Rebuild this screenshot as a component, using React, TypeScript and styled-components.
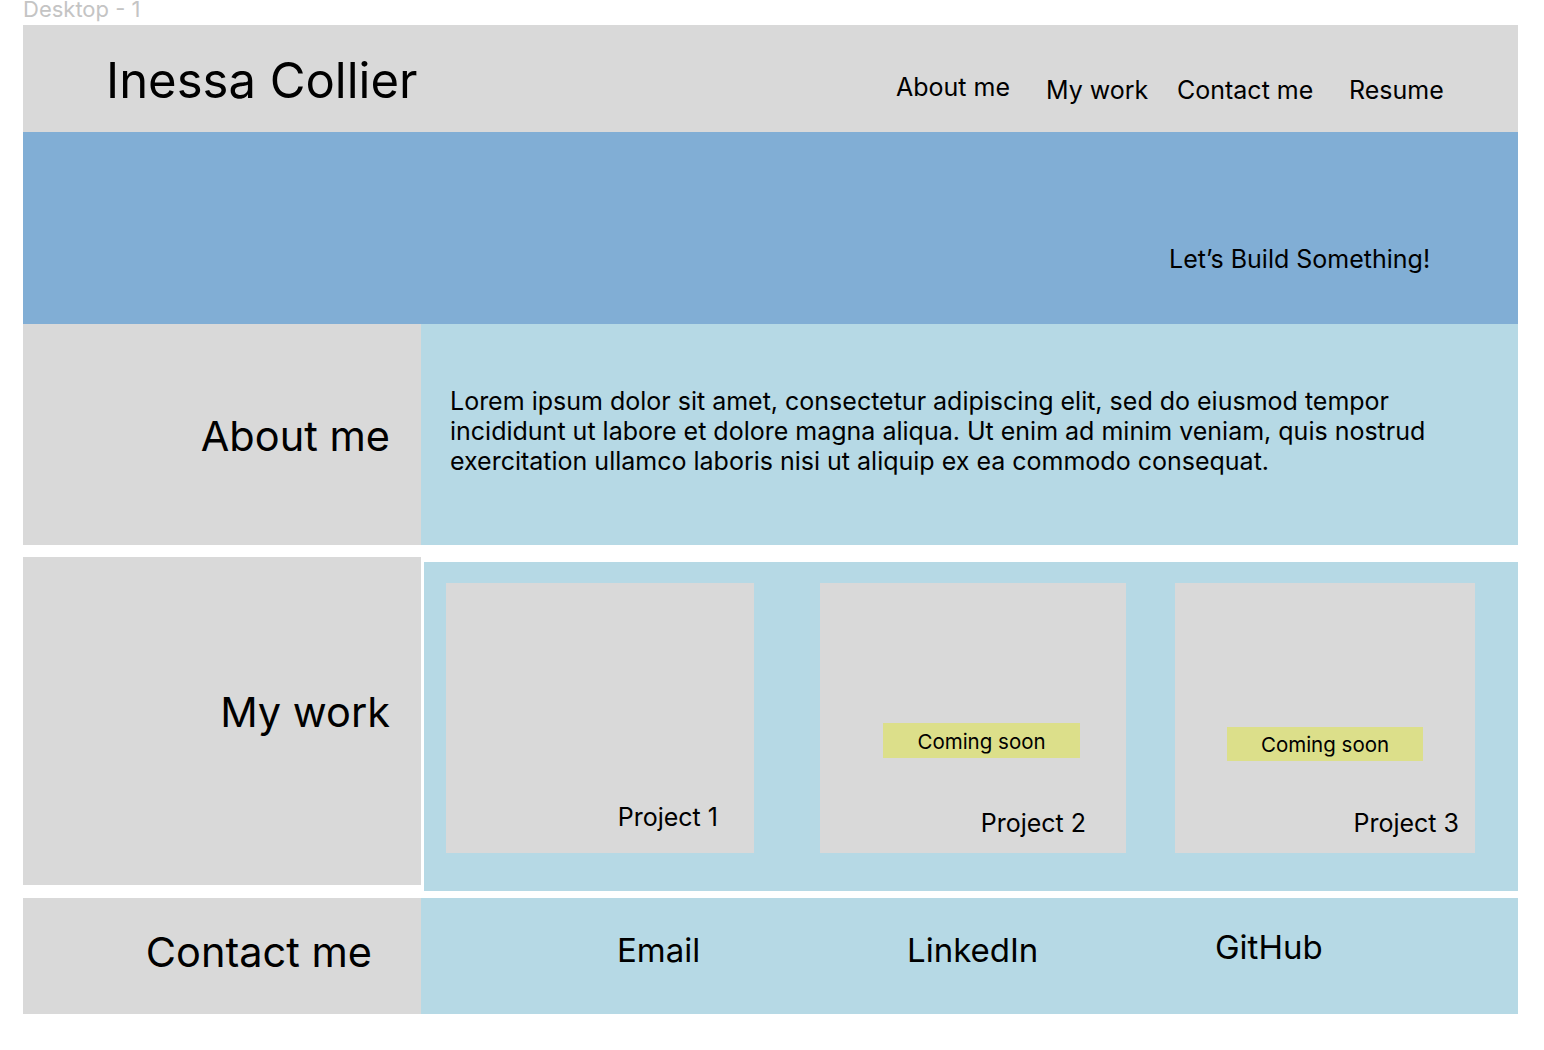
import React from "react";
import styled, { createGlobalStyle } from "styled-components";

const Global = createGlobalStyle`
  html, body {
    margin: 0;
    padding: 0;
    background: #ffffff;
  }
  body {
    font-family: Inter, "Noto Sans", "Liberation Sans", sans-serif;
    color: #000000;
    overflow: hidden;
  }
`;

const GRAY = "#d9d9d9";
const HERO = "#81aed5";
const LIGHT = "#b6d9e5";
const BADGE = "#dcdf8a";

const Canvas = styled.div`
  width: 1544px;
  height: 1050px;
  padding-left: 23px;
  box-sizing: border-box;
`;

const FrameLabel = styled.div`
  height: 25px;
  font-size: 22px;
  line-height: 18px;
  color: #c4c4c4;
  overflow: visible;
  white-space: nowrap;
`;

const Frame = styled.div`
  width: 1495px;
  display: flex;
  flex-direction: column;
`;

const Header = styled.header`
  height: 107px;
  background: ${GRAY};
  display: grid;
  grid-template-columns: 873px 1fr;
`;

const Logo = styled.h1`
  margin: 0;
  padding: 26px 0 0 83px;
  font-size: 49px;
  line-height: 60px;
  font-weight: 400;
  white-space: nowrap;
`;

const Nav = styled.nav`
  display: flex;
  align-items: flex-start;
  padding-top: 50px;
`;

const NavItem = styled.a<{ $w?: number; $lift?: number }>`
  display: block;
  width: ${(p) => (p.$w ? `${p.$w}px` : "auto")};
  margin-top: ${(p) => -(p.$lift || 0)}px;
  font-size: 25px;
  line-height: 30px;
  color: #000;
  text-decoration: none;
  white-space: nowrap;
`;

const Hero = styled.section`
  height: 192px;
  background: ${HERO};
  padding: 112px 0 0 1146px;
  box-sizing: border-box;
`;

const Tagline = styled.p`
  margin: 0;
  font-size: 25px;
  line-height: 30px;
  white-space: nowrap;
`;

const Row = styled.section<{ $top?: number; $gap?: number }>`
  display: flex;
  align-items: flex-start;
  gap: ${(p) => p.$gap || 0}px;
  margin-top: ${(p) => p.$top || 0}px;
`;

const SideTitle = styled.div<{ $h: number; $pt: number; $pr: number }>`
  width: 398px;
  flex-shrink: 0;
  height: ${(p) => p.$h}px;
  background: ${GRAY};
  box-sizing: border-box;
  padding: ${(p) => p.$pt}px ${(p) => p.$pr}px 0 0;
  text-align: right;
  font-size: 41.5px;
  line-height: 48px;
  white-space: nowrap;
`;

const Panel = styled.div<{ $h?: number; $offset?: number }>`
  flex: 1;
  background: ${LIGHT};
  height: ${(p) => (p.$h ? `${p.$h}px` : "auto")};
  margin-top: ${(p) => p.$offset || 0}px;
  box-sizing: border-box;
`;

const AboutPanel = styled(Panel)`
  padding: 62px 0 0 29px;
`;

const AboutText = styled.p`
  margin: 0;
  max-width: 1010px;
  font-size: 25px;
  line-height: 30px;
`;

const WorkPanel = styled(Panel)`
  display: flex;
  align-items: flex-start;
  padding: 21px 0 38px 22px;
`;

const Card = styled.article<{ $w: number; $gap: number }>`
  width: ${(p) => p.$w}px;
  height: 270px;
  margin-right: ${(p) => p.$gap}px;
  background: ${GRAY};
  display: flex;
  flex-direction: column;
  box-sizing: border-box;
`;

const Badge = styled.div<{ $top: number; $left: number; $w: number; $h: number }>`
  margin-top: ${(p) => p.$top}px;
  margin-left: ${(p) => p.$left}px;
  width: ${(p) => p.$w}px;
  height: ${(p) => p.$h}px;
  background: ${BADGE};
  display: flex;
  align-items: center;
  justify-content: center;
  font-size: 20.5px;
  line-height: 24px;
  padding-top: 2px;
  box-sizing: border-box;
`;

const CardLabel = styled.div<{ $right: number; $bottom: number }>`
  margin-top: auto;
  align-self: flex-end;
  padding: 0 ${(p) => p.$right}px ${(p) => p.$bottom}px 0;
  font-size: 25px;
  line-height: 30px;
  white-space: nowrap;
`;

const ContactPanel = styled(Panel)`
  display: flex;
  align-items: flex-start;
  padding: 32px 0 0 196px;
`;

const ContactLink = styled.a<{ $w?: number; $lift?: number }>`
  display: block;
  width: ${(p) => (p.$w ? `${p.$w}px` : "auto")};
  margin-top: ${(p) => -(p.$lift || 0)}px;
  font-size: 33px;
  line-height: 40px;
  color: #000;
  text-decoration: none;
  white-space: nowrap;
`;

export default function App() {
  return (
    <>
      <Global />
      <Canvas>
        <FrameLabel>Desktop - 1</FrameLabel>
        <Frame>
          <Header>
            <Logo>Inessa Collier</Logo>
            <Nav>
              <NavItem $w={150} $lift={3}>About me</NavItem>
              <NavItem $w={131}>My work</NavItem>
              <NavItem $w={172}>Contact me</NavItem>
              <NavItem>Resume</NavItem>
            </Nav>
          </Header>
          <Hero>
            <Tagline>Let’s Build Something!</Tagline>
          </Hero>
          <Row>
            <SideTitle $h={221} $pt={88} $pr={31}>About me</SideTitle>
            <AboutPanel $h={221}>
              <AboutText>
                Lorem ipsum dolor sit amet, consectetur adipiscing elit, sed do eiusmod tempor
                incididunt ut labore et dolore magna aliqua. Ut enim ad minim veniam, quis nostrud
                exercitation ullamco laboris nisi ut aliquip ex ea commodo consequat.
              </AboutText>
            </AboutPanel>
          </Row>
          <Row $top={12} $gap={3}>
            <SideTitle $h={328} $pt={131} $pr={31}>My work</SideTitle>
            <WorkPanel $offset={5}>
              <Card $w={308} $gap={66}>
                <CardLabel $right={36} $bottom={21}>Project 1</CardLabel>
              </Card>
              <Card $w={306} $gap={49}>
                <Badge $top={140} $left={63} $w={197} $h={35}>Coming soon</Badge>
                <CardLabel $right={40} $bottom={15}>Project 2</CardLabel>
              </Card>
              <Card $w={300} $gap={0}>
                <Badge $top={144} $left={52} $w={196} $h={34}>Coming soon</Badge>
                <CardLabel $right={16} $bottom={15}>Project 3</CardLabel>
              </Card>
            </WorkPanel>
          </Row>
          <Row $top={7}>
            <SideTitle $h={116} $pt={30} $pr={49}>Contact me</SideTitle>
            <ContactPanel $h={116}>
              <ContactLink $w={290}>Email</ContactLink>
              <ContactLink $w={308}>LinkedIn</ContactLink>
              <ContactLink $lift={3}>GitHub</ContactLink>
            </ContactPanel>
          </Row>
        </Frame>
      </Canvas>
    </>
  );
}
